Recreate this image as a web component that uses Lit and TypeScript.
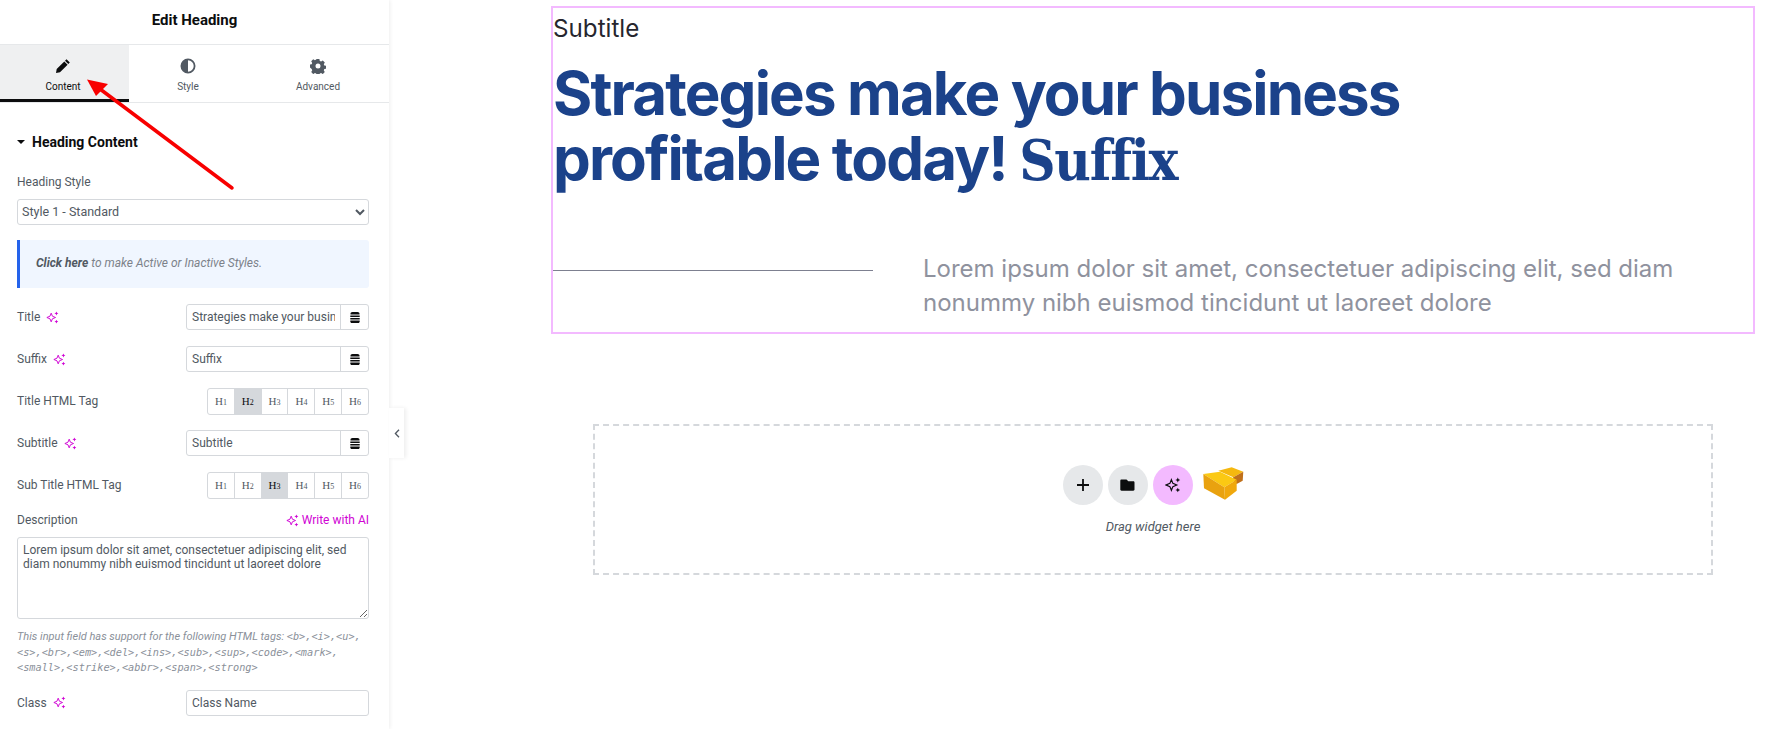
import { LitElement, html, css, svg } from 'lit'
import { customElement } from 'lit/decorators.js'

const sparkle = svg`<path d="M6 2.500 7.400 6 11 7.500 7.400 9 6 12.500 4.600 9 1 7.500 4.600 6Z" fill="none" stroke="currentColor" stroke-width="1.100"/><path d="M12 0.500l.7 1.600 1.600.7-1.600.7-.7 1.600-.7-1.600-1.600-.7 1.600-.7ZM12 10l.7 1.500 1.500.7-1.500.7-.7 1.500-.7-1.500-1.500-.7 1.500-.7Z" fill="currentColor"/>`

const spark = () => html`<svg class="spark" viewBox="0 0 15 15">${sparkle}</svg>`

const db = html`<svg class="db" viewBox="0 0 10 11"><path d="M2.500 0h5C8.800 0 9.500.8 9.500 1.800V2.600H.5V1.800C.5.800 1.200 0 2.500 0ZM.3 3.500h9.400v1.600H.3ZM.3 6h9.400v1.600H.3ZM.3 8.500h9.400V9.500c0 .9-.6 1.500-1.500 1.500H1.800C.9 11 .3 10.400.3 9.500Z" fill="#0c0d0e"/></svg>`

@customElement('app-root')
export class AppRoot extends LitElement {
  static styles = css`
    :host {
      display: flex;
      position: relative;
      width: 1765px;
      height: 729px;
      overflow: hidden;
      background: #fff;
      font-family: Roboto, sans-serif;
      font-size: 12px;
      color: #515962;
    }
    .panel {
      width: 389px;
      height: 729px;
      flex: none;
      box-sizing: border-box;
      overflow: hidden;
      background: #fff;
      box-shadow: 1px 0 4px rgba(0, 0, 0, 0.07);
    }
    .head {
      height: 44px;
      line-height: 40px;
      text-align: center;
      font-size: 15px;
      font-weight: 700;
      color: #0c0d0e;
      border-bottom: 1px solid #e6e8ea;
    }
    .tabs {
      display: grid;
      grid-template-columns: 129px 118px 142px;
      height: 58px;
      border-bottom: 1px solid #e6e8ea;
      box-sizing: border-box;
    }
    .tab {
      display: flex;
      flex-direction: column;
      align-items: center;
      padding-top: 13px;
      gap: 6px;
      box-sizing: border-box;
      font-size: 10px;
      line-height: 13px;
      color: #515962;
    }
    .tab svg {
      width: 16px;
      height: 16px;
    }
    .tab.on {
      background: #eff0f1;
      color: #0c0d0e;
      border-bottom: 3px solid #0c0d0e;
      height: 57px;
      padding-right: 3px;
    }
    .body {
      padding: 0 20px 0 17px;
      display: flex;
      flex-direction: column;
    }
    .section {
      display: flex;
      align-items: center;
      gap: 7px;
      margin-top: 30px;
      height: 18px;
      font-size: 14px;
      font-weight: 700;
      color: #0c0d0e;
    }
    .caret {
      width: 0;
      height: 0;
      border-left: 4px solid transparent;
      border-right: 4px solid transparent;
      border-top: 4px solid #0c0d0e;
    }
    .label {
      display: flex;
      align-items: center;
      gap: 6px;
    }
    .spark {
      width: 13px;
      height: 13px;
      color: #d004d4;
    }
    .stack-label {
      margin-top: 23px;
      line-height: 16px;
    }
    select {
      display: block;
      width: 100%;
      height: 26px;
      margin-top: 9px;
      padding: 0 0 1px;
      border: 1px solid #d5d8dc;
      border-radius: 3px;
      background: #fff;
      font: 12.5px Roboto, sans-serif;
      color: #515962;
    }
    .notice {
      margin-top: 15px;
      height: 48px;
      box-sizing: border-box;
      padding: 16px 0 0 16px;
      background: #f0f6ff;
      border-left: 3px solid #2563eb;
      border-radius: 0 3px 3px 0;
      font-size: 12px;
      font-style: italic;
      color: #7c828a;
    }
    .notice b {
      color: #515962;
    }
    .row {
      display: flex;
      align-items: center;
      justify-content: space-between;
      height: 26px;
      margin-top: 16px;
    }
    .control {
      display: flex;
      width: 183px;
      height: 26px;
      box-sizing: border-box;
      border: 1px solid #d5d8dc;
      border-radius: 3px;
    }
    .control input {
      flex: 1;
      min-width: 0;
      border: 0;
      outline: 0;
      padding: 0 5px;
      background: transparent;
      font: 12px Roboto, sans-serif;
      color: #515962;
    }
    .control input::placeholder {
      color: #515962;
      opacity: 1;
    }
    .dyn {
      width: 27px;
      flex: none;
      display: flex;
      align-items: center;
      justify-content: center;
      border-left: 1px solid #d5d8dc;
    }
    .db {
      width: 10px;
      height: 11px;
    }
    .tags {
      display: flex;
      width: 162px;
      height: 27px;
      box-sizing: border-box;
      border: 1px solid #d5d8dc;
      border-radius: 3px;
      overflow: hidden;
    }
    .tag {
      flex: 1;
      display: flex;
      align-items: center;
      justify-content: center;
      border-right: 1px solid #d5d8dc;
      font-family: 'Liberation Serif', serif;
      font-size: 11px;
      color: #515962;
    }
    .tag small {
      font-size: 8px;
      position: relative;
      top: 1px;
    }
    .tag:last-child {
      border-right: 0;
    }
    .tag.on {
      background: #d5d8dc;
      color: #0c0d0e;
    }
    .desc-head {
      display: flex;
      justify-content: space-between;
      margin-top: 14px;
      line-height: 16px;
    }
    .write {
      display: flex;
      align-items: center;
      gap: 3px;
      font-size: 12px;
      color: #d004d4;
    }
    textarea {
      display: block;
      width: 100%;
      height: 82px;
      box-sizing: border-box;
      margin-top: 9px;
      padding: 5px 5px;
      border: 1px solid #d5d8dc;
      border-radius: 3px;
      outline: 0;
      font: 12px/14px Roboto, sans-serif;
      color: #515962;
    }
    .help {
      margin-top: 10px;
      font-size: 11px;
      line-height: 15.5px;
      font-style: italic;
      color: #8a9099;
    }
    .help code {
      font-family: 'DejaVu Sans Mono', monospace;
      font-size: 10.25px;
      font-style: italic;
    }
    .row.last {
      margin-top: 14px;
    }
    .toggle {
      align-self: flex-start;
      position: relative;
      z-index: 1;
      width: 15px;
      height: 50px;
      margin-top: 408px;
      flex: none;
      display: flex;
      align-items: center;
      justify-content: center;
      background: #fff;
      box-shadow: 2px 0 4px rgba(0, 0, 0, 0.07);
    }
    .toggle svg {
      width: 6px;
      height: 9px;
    }
    .canvas {
      flex: 1;
      min-width: 0;
      box-sizing: border-box;
      padding: 6px 10px 0 162px;
      margin-left: -15px;
    }
    .widget {
      height: 328px;
      box-sizing: border-box;
      border: 2px solid #f3baff;
      display: flex;
      flex-direction: column;
    }
    .subtitle {
      margin-top: 5px;
      font-family: Inter, sans-serif;
      font-size: 24.2px;
      line-height: 32px;
      color: #26262e;
    }
    h2 {
      margin: 16px 0 0;
      width: 900px;
      font-family: Inter, sans-serif;
      font-size: 60px;
      line-height: 65px;
      font-weight: 700;
      letter-spacing: -1.87px;
      color: #1b428a;
    }
    h2 span {
      font-family: 'DejaVu Serif Condensed', 'DejaVu Serif', serif;
      font-stretch: condensed;
      font-weight: 700;
      font-size: 56px;
      letter-spacing: -1.2px;
    }
    .lower {
      display: flex;
      align-items: flex-start;
      margin-top: 59px;
    }
    .rule {
      width: 320px;
      height: 1px;
      margin-top: 18px;
      flex: none;
      background: #7d8090;
    }
    .lede {
      margin: 0 0 0 50px;
      width: 800px;
      font-family: Inter, sans-serif;
      font-size: 24px;
      line-height: 34px;
      color: #8f929e;
    }
    .drop {
      height: 151px;
      box-sizing: border-box;
      margin: 90px 42px 0 42px;
      border: 2px dashed #d5d8dc;
      display: flex;
      flex-direction: column;
      align-items: center;
      padding-top: 39px;
    }
    .btns {
      display: flex;
      align-items: center;
      gap: 5px;
      height: 40px;
    }
    .circle {
      width: 40px;
      height: 40px;
      border-radius: 50%;
      background: #e6e8ea;
      display: flex;
      align-items: center;
      justify-content: center;
    }
    .circle.ai {
      background: #f3baff;
      color: #0c0d0e;
    }
    .circle svg {
      width: 16px;
      height: 16px;
    }
    .cube {
      width: 42px;
      height: 36px;
      margin-left: 4px;
    }
    .hint {
      margin-top: 14px;
      font-size: 13px;
      font-style: italic;
      color: #515962;
      line-height: 16px;
    }
    .arrow {
      position: absolute;
      left: 0;
      top: 0;
      width: 389px;
      height: 250px;
      pointer-events: none;
    }
  `

  private tags(active: number) {
    return html`<div class="tags">
      ${[1, 2, 3, 4, 5, 6].map(
        (n) => html`<div class="tag ${n === active ? 'on' : ''}">H<small>${n}</small></div>`,
      )}
    </div>`
  }

  render() {
    return html`
      <aside class="panel">
        <div class="head">Edit Heading</div>
        <div class="tabs">
          <div class="tab on">
            <svg viewBox="0 0 16 16">
              <path d="M11.500 1.200 14.800 4.500 13.300 6 10 2.700ZM9.300 3.400 12.600 6.700 5 14.300 1 15 1.700 11Z" fill="#0c0d0e" />
            </svg>
            Content
          </div>
          <div class="tab">
            <svg viewBox="0 0 16 16">
              <circle cx="8" cy="8" r="6.600" fill="none" stroke="#515962" stroke-width="1.800" />
              <path d="M8 1.400a6.600 6.600 0 0 0 0 13.200Z" fill="#515962" />
            </svg>
            Style
          </div>
          <div class="tab">
            <svg viewBox="0 0 16 16">
              <path
                fill-rule="evenodd"
                fill="#515962"
                d="M6.600 1h2.800l.4 1.900 1.300.6 1.700-1 2 2-1 1.700.5 1.300 1.900.4v2.800l-1.900.4-.5 1.300 1 1.700-2 2-1.700-1-1.300.5-.4 1.900H6.600l-.4-1.900-1.300-.5-1.700 1-2-2 1-1.700-.5-1.300L0 9.400V6.600l1.700-.4.500-1.300-1-1.700 2-2 1.700 1 1.300-.6ZM8 5.500a2.500 2.500 0 1 0 0 5 2.500 2.500 0 0 0 0-5Z"
              />
            </svg>
            Advanced
          </div>
        </div>
        <div class="body">
          <div class="section"><span class="caret"></span>Heading Content</div>
          <div class="stack-label">Heading Style</div>
          <select><option>Style 1 - Standard</option></select>
          <div class="notice"><b>Click here</b> to make Active or Inactive Styles.</div>
          <div class="row">
            <div class="label">Title ${spark()}</div>
            <div class="control">
              <input value="Strategies make your business profitable today!" />
              <div class="dyn">${db}</div>
            </div>
          </div>
          <div class="row">
            <div class="label">Suffix ${spark()}</div>
            <div class="control"><input value="Suffix" /><div class="dyn">${db}</div></div>
          </div>
          <div class="row">
            <div class="label">Title HTML Tag</div>
            ${this.tags(2)}
          </div>
          <div class="row">
            <div class="label">Subtitle ${spark()}</div>
            <div class="control"><input value="Subtitle" /><div class="dyn">${db}</div></div>
          </div>
          <div class="row">
            <div class="label">Sub Title HTML Tag</div>
            ${this.tags(3)}
          </div>
          <div class="desc-head">
            <span>Description</span>
            <span class="write">${spark()}Write with AI</span>
          </div>
          <textarea>Lorem ipsum dolor sit amet, consectetuer adipiscing elit, sed diam nonummy nibh euismod tincidunt ut laoreet dolore</textarea>
          <div class="help">
            This input field has support for the following HTML tags:
            <code>&lt;b&gt;,&lt;i&gt;,&lt;u&gt;,&lt;s&gt;,&lt;br&gt;,&lt;em&gt;,&lt;del&gt;,&lt;ins&gt;,&lt;sub&gt;,&lt;sup&gt;,&lt;code&gt;,&lt;mark&gt;,&lt;small&gt;,&lt;strike&gt;,&lt;abbr&gt;,&lt;span&gt;,&lt;strong&gt;</code>
          </div>
          <div class="row last">
            <div class="label">Class ${spark()}</div>
            <div class="control"><input placeholder="Class Name" /></div>
          </div>
        </div>
      </aside>
      <div class="toggle">
        <svg viewBox="0 0 6 9"><path d="M5 .8 1.400 4.500 5 8.200" fill="none" stroke="#515962" stroke-width="1.300" /></svg>
      </div>
      <main class="canvas">
        <section class="widget">
          <div class="subtitle">Subtitle</div>
          <h2>Strategies make your business profitable today! <span>Suffix</span></h2>
          <div class="lower">
            <div class="rule"></div>
            <p class="lede">Lorem ipsum dolor sit amet, consectetuer adipiscing elit, sed diam nonummy nibh euismod tincidunt ut laoreet dolore</p>
          </div>
        </section>
        <section class="drop">
          <div class="btns">
            <div class="circle">
              <svg viewBox="0 0 16 16"><path d="M8 2v12M2 8h12" stroke="#0c0d0e" stroke-width="1.800" /></svg>
            </div>
            <div class="circle">
              <svg viewBox="0 0 16 16"><path d="M1.500 2.500h5L8.300 4.300h5c.7 0 1.200.5 1.200 1.200v7c0 .7-.5 1.200-1.200 1.200H1.500C.8 13.700.3 13.200.3 12.500v-8.800c0-.7.5-1.200 1.200-1.200Z" fill="#0c0d0e" /></svg>
            </div>
            <div class="circle ai">
              <svg viewBox="0 0 15 15">${sparkle}</svg>
            </div>
            <svg class="cube" viewBox="0 0 42 36">
              <path d="M16.300 3.700 29.700.3 41.300 4.700 31.300 10.300Z" fill="#f5b80f" />
              <path d="M31.300 10.300 41.300 4.700 40.700 13.700 34.700 17 30 13Z" fill="#c0701a" />
              <path d="M1.300 7 18 4.700 34.700 12.700 22.300 20.300Z" fill="#fbc913" />
              <path d="M1.300 7 22.300 20.300 23 32.700 2 21.300Z" fill="#e9a20f" />
              <path d="M22.300 20.300 34.700 12.700 34.700 23.700 23 32.700Z" fill="#f0a80c" />
            </svg>
          </div>
          <div class="hint">Drag widget here</div>
        </section>
      </main>
      <svg class="arrow" viewBox="0 0 389 250">
        <path d="M232 188 100 89" stroke="#f80000" stroke-width="3.500" stroke-linecap="round" />
        <path d="M87 79.500 108 84 96 96Z" fill="#f80000" />
      </svg>
    `
  }
}
